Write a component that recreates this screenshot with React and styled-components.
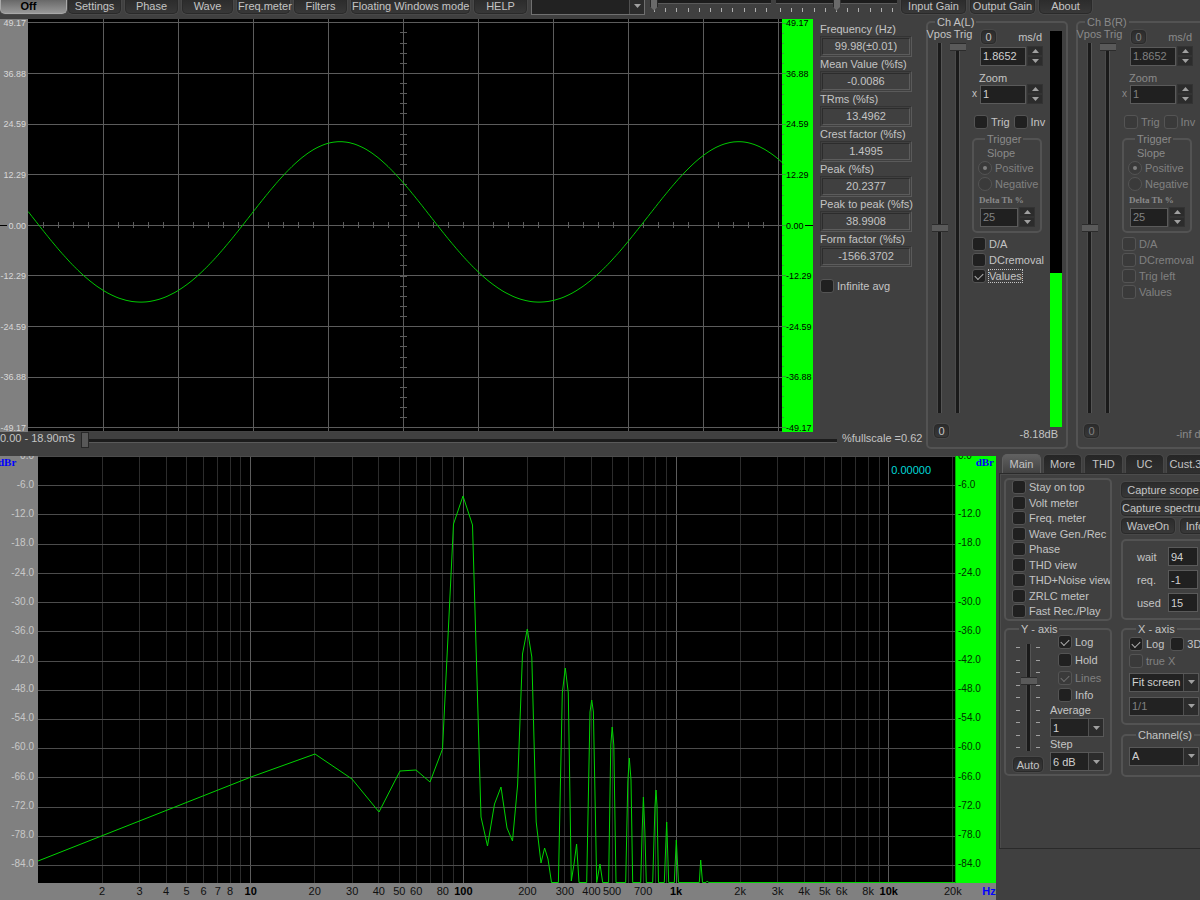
import React, { useState } from 'react'
import styled, { createGlobalStyle, css } from 'styled-components'

const GlobalStyle = createGlobalStyle`
    * { box-sizing: border-box; }
    body {
        margin: 0;
        background: #404040;
        color: #c4c4c4;
        font-family: "Liberation Sans", Arial, sans-serif;
        font-size: 11px;
        line-height: 14px;
        overflow: hidden;
    }
    button, input, select { font: inherit; color: inherit; margin: 0; }
`

const Page = styled.div`
    display: flex;
    flex-direction: column;
    min-height: 100vh;
    overflow: hidden;
`

/* ---------- shared controls ---------- */

const Button = styled.button`
    height: ${p => p.$h || 16}px;
    width: ${p => (p.$w ? p.$w + 'px' : 'auto')};
    padding: 0;
    flex: none;
    line-height: 12px;
    white-space: nowrap;
    color: ${p => (p.disabled ? '#808080' : '#c4c4c4')};
    background: linear-gradient(#2c2c2c, #383838);
    border: 1px solid #2a2a2a;
    border-radius: 4px;
    box-shadow: 0 0 0 1px #484848;
`

const Group = styled.fieldset`
    margin: 0;
    padding: 0;
    min-width: 0;
    border: 2px solid #535353;
    border-radius: 5px;
    flex: none;
    color: ${p => (p.$dim ? '#8a8a8a' : 'inherit')};
`

const Legend = styled.legend`
    margin-left: 7px;
    padding: 0 2px;
    line-height: 14px;
`

const CheckLabel = styled.label`
    display: flex;
    align-items: center;
    gap: 3px;
    height: ${p => p.$h || 16}px;
    white-space: nowrap;
    color: ${p => (p.$dim ? '#808080' : 'inherit')};
    span { line-height: 12px; }
    input:focus-visible + span, span.focused { outline: 1px dotted #c4c4c4; }
`

const CheckInput = styled.input`
    appearance: none;
    flex: none;
    width: 14px;
    height: 14px;
    border: 1px solid #545454;
    border-radius: ${p => (p.type === 'radio' ? '7px' : '3px')};
    background: ${p => (p.disabled ? '#3a3a3a' : '#202020')};
    display: grid;
    place-items: center;

    &:checked::after {
        content: '';
        ${p => p.type === 'radio' ? css`
            width: 4px;
            height: 4px;
            border-radius: 2px;
            background: #808080;
        ` : css`
            width: 7px;
            height: 4px;
            margin-bottom: 2px;
            border: solid ${p.disabled ? '#707070' : '#b0b0b0'};
            border-width: 0 0 1px 1px;
            transform: rotate(-45deg);
        `}
    }
`

const NumberInput = styled.input`
    width: ${p => p.$w}px;
    height: 19px;
    padding: 0 2px;
    background: #202020;
    border: 1px solid #5a5a5a;
    color: ${p => (p.disabled ? '#808080' : '#d0d0d0')};
`

const SpinButtons = styled.div`
    display: flex;
    flex-direction: column;
    width: 16px;
    height: 20px;
    margin-left: 1px;
    button {
        flex: 1;
        display: grid;
        place-items: center;
        padding: 0;
        border: 1px solid #333;
        background: #2c2c2c;
    }
`

const SelectBox = styled.div`
    display: flex;
    height: 19px;
    width: ${p => (p.$w ? p.$w + 'px' : 'auto')};
    border: 1px solid #585858;
    background: #222;
    color: ${p => (p.$dim ? '#808080' : '#d0d0d0')};
    select {
        appearance: none;
        flex: 1;
        min-width: 0;
        padding: 0 2px;
        border: 0;
        background: transparent;
    }
    select:disabled { opacity: 1; }
    span {
        width: 15px;
        display: grid;
        place-items: center;
        border-left: 1px solid #505050;
        background: #2c2c2c;
    }
`

const Triangle = ({ up }) => (
  <svg width="7" height="4" viewBox="0 0 7 4" aria-hidden="true">
    <path d={up ? 'M0 4 L3.5 0 L7 4 Z' : 'M0 0 L3.5 4 L7 0 Z'} fill="#a0a0a0" />
  </svg>
)

const Check = ({ children, type = 'checkbox', on = false, dim, h, focused, name }) => {
  const [checked, setChecked] = useState(on)
  return (
    <CheckLabel $dim={dim} $h={h}>
      <CheckInput type={type} name={name} disabled={dim} checked={checked}
        onChange={(e) => setChecked(e.target.checked)} />
      <span className={focused ? 'focused' : undefined}>{children}</span>
    </CheckLabel>
  )
}

const Spin = ({ label, value, w = 46, dim }) => (
  <>
    <NumberInput aria-label={label} $w={w} defaultValue={value} disabled={dim} />
    <SpinButtons>
      <button aria-label={label + ' up'} disabled={dim}><Triangle up /></button>
      <button aria-label={label + ' down'} disabled={dim}><Triangle /></button>
    </SpinButtons>
  </>
)

const Select = ({ label, options, w, dim }) => (
  <SelectBox $w={w} $dim={dim}>
    <select aria-label={label} disabled={dim}>
      {options.map(o => <option key={o}>{o}</option>)}
    </select>
    <span><Triangle /></span>
  </SelectBox>
)

const HRange = styled.input`
    appearance: none;
    width: 100%;
    min-width: 0;
    height: 16px;
    background: transparent;
    &::-webkit-slider-runnable-track {
        height: 4px;
        background: #1c1c1c;
        border-bottom: 1px solid #5a5a5a;
    }
    &::-webkit-slider-thumb {
        appearance: none;
        width: 8px;
        height: 16px;
        margin-top: -7px;
        background: #585858;
        border: 1px solid #282828;
    }
`

const VRange = styled.input`
    appearance: none;
    writing-mode: vertical-lr;
    direction: rtl;
    width: 16px;
    min-height: 0;
    flex: 1;
    background: transparent;
    &::-webkit-slider-runnable-track {
        width: 5px;
        background: #1a1a1a;
        border-right: 1px solid #555;
        border-left: 1px solid #4a4a4a;
    }
    &::-webkit-slider-thumb {
        appearance: none;
        width: 16px;
        height: 8px;
        margin-left: -6px;
        background: #5a5a5a;
        border: 1px solid #2c2c2c;
        border-width: 1px 0;
    }
`

/* ---------- toolbar ---------- */

const Toolbar = styled.header`
    display: flex;
    height: 15px;
    gap: 4px;
    flex: none;
`

const ToolButton = styled(Button)`
    height: 14px;
    border-top: 0;
    border-radius: 0 0 5px 5px;
    line-height: 11px;
`

const OffButton = styled(ToolButton)`
    margin-right: -3px;
    color: #000;
    font-weight: bold;
    background: linear-gradient(#686868, #989898);
    border-color: #a8a8a8;
    padding-right: 10px;
`

const DeviceSelect = styled.div`
    width: 114px;
    height: 15px;
    flex: none;
    overflow: hidden;
    display: flex;
    align-items: flex-end;
    ${SelectBox} { width: 100%; border-color: #707070; }
`

const GainSlider = styled.div`
    display: grid;
    width: ${p => p.$w}px;
    height: 13px;
    flex: none;
    margin-left: 1px;
    > * { grid-area: 1 / 1; }
    input { height: 3px; }
    input::-webkit-slider-thumb {
        height: 13px;
        margin-top: -2px;
        clip-path: polygon(0 0, 100% 0, 100% 70%, 50% 100%, 0 70%);
        background: #6a6a6a;
    }
`

const GainTicks = styled.div`
    display: flex;
    justify-content: space-between;
    align-self: end;
    margin: 0 4px 1px;
    i { width: 1px; height: 4px; background: #b0b0b0; }
`

const Gain = ({ w, value, label }) => (
  <GainSlider $w={w}>
    <GainTicks>{Array.from({ length: 11 }, (_, i) => <i key={i} />)}</GainTicks>
    <HRange type="range" defaultValue={value} aria-label={label} />
  </GainSlider>
)

/* ---------- oscilloscope ---------- */

const Upper = styled.section`
    display: flex;
    flex: none;
`

const ScopeColumn = styled.div`
    flex: 1;
    min-width: 0;
    display: flex;
    flex-direction: column;
    padding-top: 4px;
`

const ScopeRow = styled.div`
    display: flex;
    flex: 1;
`

const ScopeAxis = styled.div`
    display: flex;
    flex-direction: column;
    justify-content: space-between;
    flex: none;
    font-size: 9px;
    line-height: 8px;
    .zero { display: flex; align-items: center; gap: 1px; }
    ${p => p.$green ? css`
        width: 27px;
        background: #0f0;
        color: #000;
        .zero::after { content: ''; flex: 1; height: 1px; background: #000; }
    ` : css`
        width: 28px;
        background: #808080;
        color: #d8d8d8;
        text-align: right;
        padding-right: 2px;
        .zero::before { content: ''; flex: 1; height: 1px; background: #000; }
    `}
`

const EdgeTicks = styled.div`
    display: flex;
    flex-direction: column;
    justify-content: space-between;
    flex: none;
    width: 4px;
    padding: 4px 0;
    background: #0f0;
    i { height: 1px; width: 2px; background: #3a9a3a; }
    i:nth-child(5n + 1) { width: 4px; }
`

const Plot = styled.div`
    flex: 1;
    min-width: 0;
    min-height: 0;
    position: relative;
    background: #000;
    svg { position: absolute; width: 100%; height: 100%; display: block; }
`

const Values = styled.dl`
    width: 113px;
    flex: none;
    margin: 0;
    padding: 3px 14px 0 7px;
    dt { line-height: 14px; white-space: nowrap; }
    dd {
        margin: 0;
        height: 21px;
        padding: 1px;
        border: 1px solid #5a5a5a;
        border-top-color: #333;
        border-left-color: #333;
    }
    dd span {
        display: block;
        text-align: center;
        line-height: 15px;
        border: 1px solid #2c2c2c;
        border-right-color: #5c5c5c;
        border-bottom-color: #5c5c5c;
    }
    label { margin-top: 11px; }
`

const SweepRow = styled.div`
    display: flex;
    align-items: center;
    height: 17px;
    flex: none;
    gap: 5px;
    white-space: nowrap;
    span { margin-bottom: 5px; flex: none; }
    span:first-child { width: 76px; }
    span:last-child { width: 84px; }
`

const levels = ['49.17', '36.88', '24.59', '12.29', '0.00', '-12.29', '-24.59', '-36.88', '-49.17']

const measures = [
  ['Frequency (Hz)', '99.98(±0.01)'],
  ['Mean Value (%fs)', '-0.0086'],
  ['TRms (%fs)', '13.4962'],
  ['Crest factor (%fs)', '1.4995'],
  ['Peak (%fs)', '20.2377'],
  ['Peak to peak (%fs)', '38.9908'],
  ['Form factor (%fs)', '-1566.3702'],
]

// fundamental plus a little second harmonic
const wave = Array.from({ length: 378 }, (_, i) => {
  const x = i * 2
  const t = (2 * Math.PI * (x - 312)) / 398.5
  return `${x},${(206 - 80.2 * Math.cos(t) - 3.1 * Math.cos(2 * t)).toFixed(1)}`
}).join(' ')

const ScopePlot = () => (
  <svg viewBox="0 0 754 413" preserveAspectRatio="none" role="img" aria-label="Oscilloscope trace">
    <g stroke="#5c5c5c" shapeRendering="crispEdges">
      {Array.from({ length: 10 }, (_, i) => <path key={i} d={`M${75.5 + i * 75} 0V413`} />)}
      {levels.map((l, i) => <path key={l} d={`M0 ${3.8 + i * 50.6}H754`} />)}
      {Array.from({ length: 39 }, (_, i) => <path key={i} d={`M372 ${13.9 + i * 10.13}h7`} />)}
      {Array.from({ length: 49 }, (_, i) => <path key={i} d={`M${15.5 + i * 15} 203v6`} />)}
      <path d="M0 412.5H754" stroke="#444" />
    </g>
    <polyline points={wave} fill="none" stroke="#00c800" />
  </svg>
)

const LevelAxis = ({ green }) => (
  <ScopeAxis $green={green}>
    {levels.map(l => <span key={l} className={l === '0.00' ? 'zero' : undefined}>{l}</span>)}
  </ScopeAxis>
)

/* ---------- channels ---------- */

const Channels = styled.div`
    display: flex;
    gap: 8px;
    width: 274px;
    flex: none;
    overflow: hidden;
`

const ChannelGroup = styled(Group)`
    width: 142px;
    > div { display: flex; }
`

const Sliders = styled.div`
    display: flex;
    width: 44px;
    padding-left: 3px;
    gap: 2px;
    label {
        display: flex;
        flex-direction: column;
        align-items: center;
        width: 16px;
        line-height: 10px;
        gap: 4px;
        padding-bottom: 14px;
    }
    label:last-child span { margin-left: 12px; }
`

const Controls = styled.div`
    width: 78px;
    height: 398px;
    white-space: nowrap;
    > p { margin: 6px 0 0 7px; line-height: 12px; }
`

const Row = styled.div`
    display: flex;
    align-items: center;
    height: ${p => p.$h || 20}px;
    margin-top: ${p => p.$mt || 0}px;
    padding-left: ${p => p.$pl || 0}px;
    padding-right: ${p => p.$pr || 0}px;
    gap: ${p => p.$gap || 0}px;
    justify-content: ${p => (p.$spread ? 'space-between' : 'flex-start')};
`

const Times = styled.span`
    width: 8px;
    font-size: 10px;
`

const TriggerGroup = styled(Group)`
    width: 70px;
    margin: 2px 0 3px;
    padding: 0 0 4px 4px;
    color: #8a8a8a;
    p { margin: 0 0 0 9px; }
    p + label + label + p {
        margin: 2px 0 0 1px;
        font: bold 9px/13px "Liberation Serif", serif;
    }
`

const Meter = styled.div`
    width: 12px;
    margin: 2px 0 0;
    background: ${p => (p.$off ? 'transparent' : '#000')};
    display: flex;
    align-items: flex-end;
    i { width: 100%; background: #0f0; }
`

const ChannelFoot = styled.div`
    justify-content: space-between;
    align-items: flex-start;
    height: 20px;
    padding: 0 8px 0 6px;
    white-space: nowrap;
    button { margin-top: -3px; }
`

const Channel = ({ name, dim, level, readout, checks }) => (
  <ChannelGroup $dim={dim}>
    <Legend>{name}</Legend>
    <div>
      <Sliders>
        <label><span>Vpos</span><VRange type="range" defaultValue={50} disabled={dim} /></label>
        <label><span>Trig</span><VRange type="range" defaultValue={100} disabled={dim} /></label>
      </Sliders>
      <Controls>
        <Row $h={16} $pl={9} $pr={8} $spread>
          <Button $w={15} $h={14} disabled={dim}>0</Button>
          <span>ms/d</span>
        </Row>
        <Row $mt={1} $pl={8}><Spin label="ms/d" value="1.8652" dim={dim} /></Row>
        <p>Zoom</p>
        <Row><Times>x</Times><Spin label="Zoom" value="1" dim={dim} /></Row>
        <Row $h={16} $mt={10} $pl={2} $gap={4}>
          <Check dim={dim}>Trig</Check>
          <Check dim={dim}>Inv</Check>
        </Row>
        <TriggerGroup>
          <Legend>Trigger</Legend>
          <p>Slope</p>
          <Check type="radio" name={name} on dim>Positive</Check>
          <Check type="radio" name={name} dim>Negative</Check>
          <p>Delta Th %</p>
          <Row $pl={2}><Spin label="Delta Th %" value="25" w={38} dim /></Row>
        </TriggerGroup>
        {checks.map(c => <Check key={c} dim={dim} on={!dim && c === 'Values'} focused={!dim && c === 'Values'}>{c}</Check>)}
      </Controls>
      <Meter $off={dim}><i style={{ height: level + '%' }} /></Meter>
    </div>
    <ChannelFoot>
      <Button $w={15} $h={14} disabled={dim}>0</Button>
      <span>{readout}</span>
    </ChannelFoot>
  </ChannelGroup>
)

/* ---------- spectrum ---------- */

const Lower = styled.section`
    display: flex;
    flex: 1;
    margin-top: 4px;
`

const Spectrum = styled.div`
    flex: 1;
    min-width: 0;
    display: flex;
    flex-direction: column;
    margin-top: 3px;
`

const SpectrumRow = styled.div`
    display: flex;
    flex: 1;
    min-height: 0;
`

const DbAxis = styled.div`
    position: relative;
    overflow: hidden;
    display: flex;
    flex-direction: column;
    justify-content: space-between;
    flex: none;
    font-size: 10px;
    line-height: 10px;
    padding-bottom: 14px;
    span:first-child { margin-top: -5px; }
    b {
        position: absolute;
        top: 0;
        font: bold 11px/12px "Liberation Serif", serif;
        color: #00f;
    }
    ${p => p.$green ? css`
        width: 41px;
        background: #0f0;
        color: #003000;
        padding-left: 2px;
        border-left: 1px solid #0a0;
        b { right: 2px; }
    ` : css`
        width: 38px;
        background: #808080;
        color: #c8c8c8;
        text-align: right;
        padding-right: 4px;
        b { left: -2px; }
    `}
`

const Offset = styled.output`
    position: absolute;
    top: 7px;
    right: 24px;
    color: #00d8d8;
`

const HzAxis = styled.div`
    height: 17px;
    flex: none;
    background: #808080;
    color: #101010;
    padding: 0 41px 0 38px;
    div { position: relative; height: 17px; }
    span {
        position: absolute;
        top: 1px;
        transform: translateX(-50%);
    }
    .major { font-weight: bold; color: #000; }
    .unit { color: #00f; font-weight: bold; }
`

const decibels = Array.from({ length: 15 }, (_, i) => (i === 0 ? '0.0' : (-6 * i).toFixed(1)))

const hzTicks = [2, 3, 4, 5, 6, 7, 8, 10, 20, 30, 40, 50, 60, 80, 100, 200, 300, 400, 500, 700,
  1000, 2000, 3000, 4000, 5000, 6000, 8000, 10000, 20000]

const hzLines = [1, 10, 100, 1000, 10000]
  .flatMap(d => [1, 2, 3, 4, 5, 6, 7, 8, 9].map(n => n * d))
  .filter(f => f > 1 && f <= 20000)

const hzToX = (f) => 212.7 * Math.log10(f)
const isMajor = (f) => Number.isInteger(Math.round(Math.log10(f) * 1e6) / 1e6)

// trace points in plot units
const trace = [
  [0, 405], [213, 321], [277, 298], [314, 323], [341, 356], [362, 315], [378, 314], [392, 326],
  [404.5, 293], [415.5, 68], [425, 40], [434.5, 69], [443, 361], [449.5, 390], [456.5, 348],
  [463, 331], [469, 372], [474.5, 385], [479.6, 329], [484.5, 198], [489.3, 173], [493.8, 201],
  [498.2, 366], [503, 407], [506.6, 392], [510, 403], [513.5, 426.5], [520.4, 426.5],
  [524.3, 237], [527.3, 212], [530.3, 237], [533.3, 425], [536, 408], [538.6, 388], [541, 426.5],
  [548.7, 426.5], [552, 256], [553.7, 244], [555.4, 256], [558.7, 426.5], [562, 408],
  [564.7, 426.5], [570.6, 426.5], [572.8, 289], [574.2, 271], [575.8, 289], [578, 426.5],
  [587.7, 426.5], [589.8, 326], [591.3, 302], [593, 324], [594.7, 426.5], [602.7, 426.5],
  [604.2, 374], [605.4, 341], [606.8, 374], [608.3, 426.5], [614.7, 426.5], [617, 350],
  [618, 334], [619, 350], [620.5, 426.5], [626.3, 426.5], [628.7, 366], [630.7, 426.5],
  [636.3, 426.5], [638.3, 384], [640.5, 426.5], [661.3, 426.5], [662.7, 404], [664.5, 426.5],
  [668, 426.5], [669.3, 425], [670.5, 426.5], [917, 426.5],
]

const SpectrumPlot = () => (
  <svg viewBox="0 0 917 427" preserveAspectRatio="none" role="img" aria-label="Spectrum">
    <g shapeRendering="crispEdges">
      {hzLines.map(f => (
        <path key={f} d={`M${hzToX(f)} 0V427`} stroke={isMajor(f) ? '#5c5c5c' : '#2c2c2c'} />
      ))}
      {decibels.map((d, i) => <path key={d} d={`M0 ${0.4 + i * 29.23}H917`} stroke="#4c4c4c" />)}
    </g>
    <polyline points={trace.map(p => p.join()).join(' ')} fill="none" stroke="#00d400" />
  </svg>
)

/* ---------- settings panel ---------- */

const Side = styled.aside`
    width: 204px;
    flex: none;
    padding-left: 3px;
    overflow: hidden;
`

const Tabs = styled.nav`
    display: flex;
    height: 20px;
    padding: 1px 0 0 3px;
    gap: 2px;
    button {
        width: 39px;
        flex: none;
        padding: 0;
        border: 1px solid #484848;
        border-bottom: 0;
        border-radius: 5px 5px 0 0;
        background: linear-gradient(#262626, #303030);
    }
    button[aria-selected='true'] {
        background: linear-gradient(#606060, #424242);
        border-color: #606060;
    }
`

const Panel = styled.div`
    display: flex;
    align-items: flex-start;
    gap: 9px;
    width: 250px;
    height: 376px;
    padding: 4px 0 0 4px;
    border: 1px solid #2a2a2a;
    box-shadow: inset 1px 1px #4c4c4c;
`

const PanelColumn = styled.div`
    display: flex;
    flex-direction: column;
    width: ${p => p.$w}px;
`

const OptionList = styled(Group)`
    height: 143px;
    display: flex;
    flex-direction: column;
    justify-content: space-between;
    padding: 0 0 1px 6px;
    overflow: hidden;
`

const Buttons = styled.div`
    display: flex;
    flex-wrap: wrap;
    gap: 2px 5px;
    padding: 4px 0 0;
    height: 61px;
    align-content: flex-start;
`

const CounterGroup = styled(Group)`
    height: 81px;
    padding: 4px 0 0 14px;
    label { display: flex; align-items: center; height: 23px; }
    label span { width: 31px; }
`

const AxisGroup = styled(Group)`
    display: ${p => (p.$split ? 'flex' : 'block')};
    height: ${p => p.$height}px;
    margin-top: ${p => p.$mt || 2}px;
    padding-left: 6px;
`

const YSliderColumn = styled.div`
    display: flex;
    flex-direction: column;
    align-items: center;
    gap: 6px;
    width: 32px;
    padding-top: 8px;
`

const TickedSlider = styled.div`
    display: flex;
    justify-content: center;
    height: 107px;
    ${VRange} { flex: none; }
`

const SideTicks = styled.div`
    display: flex;
    flex-direction: column;
    justify-content: space-between;
    padding: 3px 0;
    i { width: 4px; height: 1px; background: #a0a0a0; }
`

const YOptions = styled.div`
    margin-top: -3px;
    padding-left: 6px;
    p { margin: 0; line-height: 15px; }
    > label { margin-left: 8px; }
`

const options = ['Stay on top', 'Volt meter', 'Freq. meter', 'Wave Gen./Rec', 'Phase', 'THD view',
  'THD+Noise view', 'ZRLC meter', 'Fast Rec./Play']

const nineTicks = Array.from({ length: 9 }, (_, i) => <i key={i} />)

const tabs = ['Main', 'More', 'THD', 'UC', 'Cust.3']

const SidePanel = () => {
  const [tab, setTab] = useState('Main')
  return (
    <Side>
      <Tabs role="tablist">
        {tabs.map(t => (
          <button key={t} role="tab" aria-selected={t === tab} onClick={() => setTab(t)}>{t}</button>
        ))}
      </Tabs>
      <Panel>
        <PanelColumn $w={108}>
          <OptionList>{options.map(o => <Check key={o} h={14}>{o}</Check>)}</OptionList>
          <AxisGroup $split $height={154} $mt={1}>
            <Legend>Y - axis</Legend>
            <YSliderColumn>
              <TickedSlider>
                <SideTicks>{nineTicks}</SideTicks>
                <VRange type="range" defaultValue={67} aria-label="Y range" />
                <SideTicks>{nineTicks}</SideTicks>
              </TickedSlider>
              <Button $w={30} $h={15}>Auto</Button>
            </YSliderColumn>
            <YOptions>
              <Check h={18} on>Log</Check>
              <Check h={18}>Hold</Check>
              <Check h={18} on dim>Lines</Check>
              <Check h={16}>Info</Check>
              <p>Average</p>
              <Select label="Average" options={['1', '2', '5', '10']} w={54} />
              <p>Step</p>
              <Select label="Step" options={['6 dB', '10 dB']} w={54} />
            </YOptions>
          </AxisGroup>
        </PanelColumn>
        <PanelColumn $w={122}>
          <Buttons>
            <Button $w={84}>Capture scope</Button>
            <Button $w={84}>Capture spectrum</Button>
            <Button $w={54}>WaveOn</Button>
            <Button $w={30}>Info</Button>
          </Buttons>
          <CounterGroup>
            <label><span>wait</span><NumberInput $w={30} defaultValue="94" /></label>
            <label><span>req.</span><NumberInput $w={30} defaultValue="-1" /></label>
            <label><span>used</span><NumberInput $w={30} defaultValue="15" /></label>
          </CounterGroup>
          <AxisGroup $height={103}>
            <Legend>X - axis</Legend>
            <Row $h={16} $gap={6}>
              <Check on>Log</Check>
              <Check>3D</Check>
            </Row>
            <Check h={18} dim>true X</Check>
            <Row $h={24}><Select label="Zoom mode" options={['Fit screen', 'Scroll']} w={70} /></Row>
            <Row $h={24}><Select label="Ratio" options={['1/1', '1/2']} w={70} dim /></Row>
          </AxisGroup>
          <AxisGroup $height={49} $mt={3}>
            <Legend>Channel(s)</Legend>
            <Row $h={28}><Select label="Channel(s)" options={['A', 'B', 'A & B']} w={70} /></Row>
          </AxisGroup>
        </PanelColumn>
      </Panel>
    </Side>
  )
}

const App = () => {
  return (
    <Page>
      <GlobalStyle />
      <Toolbar>
        <OffButton $w={67}>Off</OffButton>
        <ToolButton $w={53}>Settings</ToolButton>
        <ToolButton $w={53}>Phase</ToolButton>
        <ToolButton $w={51}>Wave</ToolButton>
        <ToolButton $w={53}>Freq.meter</ToolButton>
        <ToolButton $w={53}>Filters</ToolButton>
        <ToolButton $w={119}>Floating Windows mode</ToolButton>
        <ToolButton $w={53}>HELP</ToolButton>
        <DeviceSelect><Select label="Device" options={['']} /></DeviceSelect>
        <Gain w={121} value={0} label="Input gain" />
        <Gain w={121} value={50} label="Output gain" />
        <ToolButton $w={65}>Input Gain</ToolButton>
        <ToolButton $w={65}>Output Gain</ToolButton>
        <ToolButton $w={53}>About</ToolButton>
      </Toolbar>
      <Upper>
        <ScopeColumn>
          <ScopeRow>
            <LevelAxis />
            <Plot><ScopePlot /></Plot>
            <EdgeTicks>{Array.from({ length: 41 }, (_, i) => <i key={i} />)}</EdgeTicks>
            <LevelAxis green />
            <Values>
              {measures.map(([label, value]) => (
                <React.Fragment key={label}>
                  <dt>{label}</dt>
                  <dd><span>{value}</span></dd>
                </React.Fragment>
              ))}
              <Check>Infinite avg</Check>
            </Values>
          </ScopeRow>
          <SweepRow>
            <span>0.00 - 18.90mS</span>
            <HRange type="range" defaultValue={0} aria-label="Time position" />
            <span>%fullscale =0.62</span>
          </SweepRow>
        </ScopeColumn>
        <Channels>
          <Channel name="Ch A(L)" level={39} readout="-8.18dB" checks={['D/A', 'DCremoval', 'Values']} />
          <Channel name="Ch B(R)" level={0} readout="-inf dB" dim checks={['D/A', 'DCremoval', 'Trig left', 'Values']} />
        </Channels>
      </Upper>
      <Lower>
        <Spectrum>
          <SpectrumRow>
            <DbAxis>{decibels.map(d => <span key={d}>{d}</span>)}<b>dBr</b></DbAxis>
            <Plot>
              <SpectrumPlot />
              <Offset>0.00000</Offset>
            </Plot>
            <DbAxis $green>{decibels.map(d => <span key={d}>{d}</span>)}<b>dBr</b></DbAxis>
          </SpectrumRow>
          <HzAxis>
            <div>
              {hzTicks.map(f => (
                <span key={f} className={isMajor(f) ? 'major' : undefined} style={{ left: hzToX(f) / 9.17 + '%' }}>
                  {f >= 1000 ? f / 1000 + 'k' : f}
                </span>
              ))}
              <span className="unit" style={{ left: '103.7%' }}>Hz</span>
            </div>
          </HzAxis>
        </Spectrum>
        <SidePanel />
      </Lower>
    </Page>
  )
}

export default App
